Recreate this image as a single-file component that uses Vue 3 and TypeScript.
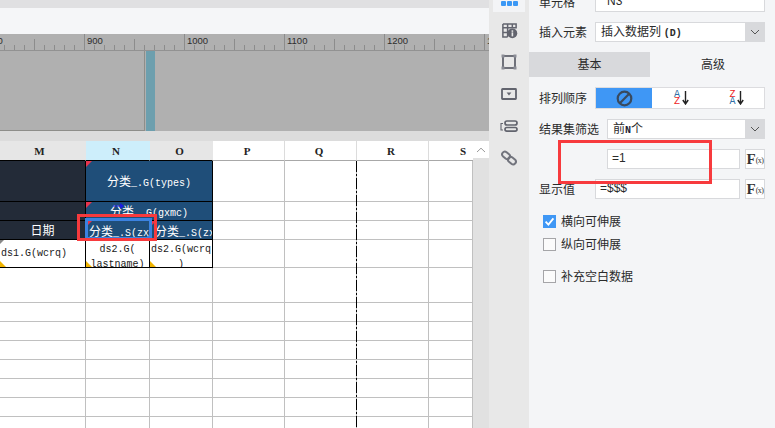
<script setup lang="ts">
interface Cell {
  key: string;
  cn?: string;
  text?: string;
  cls?: string;
  span?: number;
}

const majors = [800, 900, 1000, 1100, 1200, 1300];
const ticks: { x: number; y: number }[] = [];
for (let x = 4; x < 489; x += 10) {
  const v = x - 84 + 900;
  const y = v % 100 === 0 ? 0 : v % 50 === 0 ? 5 : 11;
  ticks.push({ x: x + 0.5, y });
}

const headers = [
  { t: 'M', c: 'hm' },
  { t: 'N', c: 'hn' },
  { t: 'O', c: 'ho' },
  { t: 'P', c: '' },
  { t: 'Q', c: '' },
  { t: 'R', c: '' },
  { t: 'S', c: 'hs' },
];
const rowHeights = [20, 41, 19, 19, 28, 35, 19, 19, 19, 19, 19, 19, 12];
const gridStyle = { gridTemplateRows: rowHeights.map((h) => h + 'px').join(' ') };

function blanks(r: number, n: number): Cell[] {
  const out: Cell[] = [];
  for (let i = 0; i < n; i++) out.push({ key: `b${r}-${i}`, cls: 'blank' });
  return out;
}

const cells: Cell[] = [
  { key: 'm1', cls: 'dark' },
  { key: 'n1', cn: '分类', text: '_.G(types)', cls: 'blue center flag', span: 2 },
  ...blanks(1, 4),
  { key: 'm2', cls: 'dark' },
  { key: 'n2', cn: '分类', text: '_.G(gxmc)', cls: 'blue center flag arrowed', span: 2 },
  ...blanks(2, 4),
  { key: 'm3', cn: '日期', cls: 'dark center' },
  { key: 'n3', cn: '分类', text: '_.S(zx', cls: 'blue left3 flag' },
  { key: 'o3', cn: '分类', text: '_.S(zx', cls: 'blue left5 flag' },
  ...blanks(3, 4),
  { key: 'm4', text: 'ds1.G(wcrq)', cls: 'data mid gray warn' },
  { key: 'n4', text: 'ds2.G(\nlastname)', cls: 'data wrap warn' },
  { key: 'o4', text: 'ds2.G(wcrq\n)', cls: 'data wrap warn' },
  ...blanks(4, 4),
  ...Array.from({ length: 8 }, (_, i) => blanks(5 + i, 7)).flat(),
];

const fx = 'F';
</script>

<template>
  <div class="screen">
    <div class="left">
      <div class="topbar"></div>
      <div class="toolbar"></div>
      <svg class="ruler" width="489" height="17" viewBox="0 0 489 17">
        <line v-for="t in ticks" :key="t.x" :x1="t.x" :x2="t.x" :y1="t.y" y2="17" stroke="#8c8c8c" stroke-width="1" />
        <line x1="0" x2="489" y1="16.5" y2="16.5" stroke="#929292" />
        <text
          v-for="m in majors"
          :key="m"
          :x="m - 900 + 87"
          y="10"
          font-size="9.5"
          font-family="'Liberation Sans', sans-serif"
          fill="#2c2c2c"
        >{{ m }}</text>
      </svg>
      <div class="canvas">
        <div class="paper"></div>
        <div class="teal"></div>
      </div>
      <div class="gutter"></div>
      <div class="sheetrow">
        <div class="sheet" :style="gridStyle">
          <div v-for="h in headers" :key="h.t" class="head" :class="h.c">{{ h.t }}</div>
          <div
            v-for="c in cells"
            :key="c.key"
            class="cell"
            :class="c.cls"
            :style="c.span ? { gridColumn: 'span ' + c.span } : undefined"
          >
            <span><span v-if="c.cn" class="cn">{{ c.cn }}</span>{{ c.text }}</span>
          </div>
          <div class="pagebreak"></div>
        </div>
        <div class="scroll">
          <div class="scrollbtn">
            <svg width="10" height="6" viewBox="0 0 10 6"><path d="M1 5 L5 1.2 L9 5" fill="none" stroke="#9a9a9a" /></svg>
          </div>
        </div>
      </div>
    </div>

    <div class="rail">
      <div class="rail-active">
        <i></i><i></i><i></i>
      </div>
      <svg class="ic ic-table" width="17" height="17" viewBox="0 0 18 18">
        <path d="M2 2 H16 V7 M2 2 V16 H7 M2 6 H16 M7 2 V16 M12 2 V7 M2 11 H8" fill="none" stroke="#62646e" stroke-width="1.6" />
        <circle cx="12" cy="12" r="5.2" fill="#62646e" />
        <rect x="11.2" y="8.8" width="1.7" height="1.6" fill="#e8e8e8" />
        <rect x="11.2" y="11" width="1.7" height="4.2" fill="#e8e8e8" />
      </svg>
      <svg class="ic ic-square" width="16" height="16" viewBox="0 0 16 16">
        <rect x="2" y="2" width="12" height="12" fill="none" stroke="#62646e" stroke-width="1.8" />
        <rect x="0.5" y="0.5" width="3" height="3" fill="#8b8d96" />
        <rect x="12.5" y="0.5" width="3" height="3" fill="#8b8d96" />
        <rect x="0.5" y="12.5" width="3" height="3" fill="#8b8d96" />
        <rect x="12.5" y="12.5" width="3" height="3" fill="#8b8d96" />
      </svg>
      <svg class="ic ic-drop" width="16" height="12" viewBox="0 0 16 12">
        <rect x="1" y="1" width="14" height="10" rx="0.5" fill="none" stroke="#62646e" stroke-width="1.8" />
        <path d="M5.6 4.6 H10.4 L8 7.6 Z" fill="#62646e" />
      </svg>
      <svg class="ic ic-layout" width="18" height="12" viewBox="0 0 18 12">
        <path d="M3 3.5 H1 V10 H3" fill="none" stroke="#62646e" stroke-width="1.1" />
        <rect x="5" y="1" width="12" height="4" rx="2" fill="none" stroke="#62646e" stroke-width="1.7" />
        <rect x="5" y="7.5" width="12" height="3.6" rx="1.8" fill="none" stroke="#62646e" stroke-width="1.7" />
      </svg>
      <svg class="ic ic-link" width="16" height="16" viewBox="0 0 16 16">
        <g fill="none" stroke="#72747d" stroke-width="2">
          <rect x="0.8" y="2.6" width="8.6" height="5.4" rx="2.7" transform="rotate(40 5 5.3)" />
          <rect x="6.6" y="8" width="8.6" height="5.4" rx="2.7" transform="rotate(40 11 10.7)" />
        </g>
      </svg>
    </div>

    <div class="panel">
      <div class="row first">
        <label class="lab">单元格</label>
        <div class="inp">N3</div>
      </div>
      <div class="row">
        <label class="lab">插入元素</label>
        <div class="select">
          <span class="val">插入数据列 <small>(D)</small></span>
          <span class="chev"><svg width="10" height="6" viewBox="0 0 10 6"><path d="M1 1 L5 5 L9 1" fill="none" stroke="#555" /></svg></span>
        </div>
      </div>
      <div class="tabs">
        <div class="tab on">基本</div>
        <div class="tab">高级</div>
      </div>
      <div class="row seg-row">
        <label class="lab">排列顺序</label>
        <div class="seg">
          <div class="seg-i active">
            <svg width="17" height="17" viewBox="0 0 17 17">
              <circle cx="8.5" cy="8.5" r="6.8" fill="none" stroke="#394a5e" stroke-width="2.2" />
              <path d="M3.8 13.2 L13.2 3.8" stroke="#394a5e" stroke-width="2.2" />
            </svg>
          </div>
          <div class="seg-i mid">
            <span class="sort"><span class="az"><b class="a">A</b><b class="z">Z</b></span><svg width="7" height="14" viewBox="0 0 7 14"><path d="M3.5 0 V13 M0.8 9 L3.5 13 L6.2 9" fill="none" stroke="#222" stroke-width="1.4" /></svg></span>
          </div>
          <div class="seg-i last">
            <span class="sort"><span class="az"><b class="z">Z</b><b class="a">A</b></span><svg width="7" height="14" viewBox="0 0 7 14"><path d="M3.5 0 V13 M0.8 9 L3.5 13 L6.2 9" fill="none" stroke="#222" stroke-width="1.4" /></svg></span>
          </div>
        </div>
      </div>
      <div class="row">
        <label class="lab wide">结果集筛选</label>
        <div class="select">
          <span class="val">前<small class="n">N</small>个</span>
          <span class="chev"><svg width="10" height="6" viewBox="0 0 10 6"><path d="M1 1 L5 5 L9 1" fill="none" stroke="#555" /></svg></span>
        </div>
      </div>
      <div class="row indent">
        <div class="inp formula">=1</div>
        <div class="fx">{{ fx }}<small>(x)</small></div>
      </div>
      <div class="row">
        <label class="lab">显示值</label>
        <div class="inp formula">=$$$</div>
        <div class="fx">{{ fx }}<small>(x)</small></div>
      </div>
      <div class="checks">
        <div class="chk">
          <span class="box on"><svg width="13" height="13" viewBox="0 0 13 13"><path d="M2.6 6.6 L5.4 9.6 L10.4 3.4" fill="none" stroke="#fff" stroke-width="1.8" /></svg></span><span class="txt">横向可伸展</span>
        </div>
        <div class="chk">
          <span class="box"></span><span class="txt">纵向可伸展</span>
        </div>
        <div class="chk gap">
          <span class="box"></span><span class="txt">补充空白数据</span>
        </div>
      </div>
    </div>

    <div class="selection"><i></i></div>
    <div class="redbox one"></div>
    <div class="redbox two"></div>
  </div>
</template>

<style>
html, body { margin: 0; padding: 0; background: #f4f5f7; }
</style>

<style scoped>
.screen {
  position: relative;
  display: flex;
  width: 775px;
  height: 428px;
  overflow: hidden;
  font-family: "Noto Sans CJK SC", "Liberation Sans", sans-serif;
  font-size: 12px;
  color: #2b2b2b;
}
.left { width: 489px; flex: none; display: flex; flex-direction: column; }
.topbar { height: 8px; background: #e0e0e2; }
.toolbar { height: 26px; background: #f5f6f8; }
.ruler { display: block; background: #b0b0b0; }
.canvas { height: 80px; display: flex; background: #b0b0b0; }
.paper { width: 144px; height: 79px; border-right: 1px solid #8e8e8a; border-bottom: 1px solid #8e8e8a; box-sizing: content-box; }
.teal { width: 9px; margin-left: 1px; background: #6d9fae; }
.gutter { height: 10px; background: #dcdcdc; }
.sheetrow { flex: 1; display: flex; min-height: 0; }
.sheet {
  position: relative;
  width: 473px;
  flex: none;
  display: grid;
  grid-template-columns: 86px 64px 63px 72px 72px 72px 44px;
  background: #fff;
  overflow: hidden;
}
.head {
  display: flex;
  align-items: center;
  justify-content: center;
  padding-right: 3px;
  box-sizing: border-box;
  font-family: "Liberation Serif", serif;
  font-size: 11px;
  font-weight: 700;
  color: #222;
  background: #fff;
  border-right: 1px solid #dcdcdc;
  border-bottom: 1px solid #a8a8a8;
}
.hm { background: #e6e6e6; padding-right: 6px; border-bottom-color: #000; border-right-color: #e6e6e6; }
.hn { background: #cdeefb; border-bottom-color: #000; border-right-color: #cdeefb; }
.ho { background: #e6e6e6; border-bottom-color: #000; border-right-color: #e6e6e6; }
.hs { justify-content: center; padding: 0 0 0 24px; border-right: 0; }

.cell {
  position: relative;
  box-sizing: border-box;
  overflow: hidden;
  white-space: nowrap;
  font-family: "Liberation Mono", monospace;
  font-size: 10px;
  border-right: 1px solid #000;
  border-bottom: 1px solid #000;
  min-width: 0;
}
.cn { font-family: "Noto Sans CJK SC", sans-serif; font-size: 12px; }
.blank { border-right-color: #c0c0c0; border-bottom-color: #c0c0c0; }
.dark { background: #232b38; color: #fff; }
.blue { background: #1f4e79; color: #fff; }
.data { background: #fff; color: #1a1a1a; }
.center { display: flex; align-items: center; justify-content: center; padding-bottom: 1px; }
.left3 { display: flex; align-items: center; padding-left: 3px; }
.left5 { display: flex; align-items: center; padding-left: 5px; }
.mid { display: flex; align-items: center; padding: 0 0 0 1px; }
.wrap { white-space: pre-line; text-align: center; line-height: 15px; padding-top: 2px; }
.flag::before {
  content: "";
  position: absolute;
  left: 0;
  top: 0;
  border-top: 6px solid #e8344e;
  border-right: 6px solid transparent;
}
.gray::before {
  content: "";
  position: absolute;
  left: 0;
  top: 0;
  border-top: 4px solid #888;
  border-right: 4px solid transparent;
}
.warn::after {
  content: "";
  position: absolute;
  left: 0;
  bottom: 0;
  border-bottom: 6px solid #f0b400;
  border-right: 6px solid transparent;
}
.arrowed::after {
  content: "";
  position: absolute;
  left: 27px;
  top: 1px;
  width: 11px;
  height: 6px;
  background: #1c1ce6;
  clip-path: polygon(0 40%, 65% 40%, 65% 0, 100% 50%, 65% 100%, 65% 60%, 0 60%);
}
.pagebreak {
  position: absolute;
  left: 356px;
  top: 20px;
  bottom: 0;
  width: 1px;
  background: repeating-linear-gradient(to bottom, #000 0 11px, #bbb 11px 13px, #000 13px 15px, #bbb 15px 17px);
}
.scroll { width: 16px; flex: none; background: #e1e1e1; }
.scrollbtn { height: 17px; background: #fff; display: flex; align-items: center; justify-content: center; }

.rail {
  position: relative;
  width: 40px;
  flex: none;
  background: #e8e8e8;
  display: flex;
  flex-direction: column;
  align-items: center;
}
.rail-active {
  width: 32px;
  height: 12px;
  background: #f3f4f6;
  display: flex;
  justify-content: center;
  gap: 1px;
  padding-top: 1px;
  box-sizing: border-box;
}
.rail-active i { display: block; width: 5px; height: 5px; background: #3b98f5; border-radius: 1px; }
.ic { display: block; flex: none; }
.ic-table { margin-top: 10px; }
.ic-square { margin-top: 15px; }
.ic-drop { margin-top: 18px; }
.ic-layout { margin-top: 20px; }
.ic-link { margin-top: 18px; }

.panel {
  flex: 1;
  background: #f4f5f7;
  padding: 0 10px;
  display: flex;
  flex-direction: column;
  gap: 10px;
  min-width: 0;
}
.row { display: flex; align-items: center; height: 20px; flex: none; }
.first { margin-top: -8px; }
.lab { width: 56px; flex: none; padding-bottom: 2px; }
.lab.wide { width: 68px; }
.inp {
  flex: 1;
  height: 20px;
  box-sizing: border-box;
  background: #fff;
  border: 1px solid #d8d9dc;
  padding-left: 11px;
  line-height: 17px;
  font-family: "Liberation Sans", sans-serif;
  font-size: 12px;
}
.formula { padding-left: 4px; }
.indent { margin-left: 68px; }
.select {
  flex: 1;
  height: 20px;
  display: flex;
  box-sizing: border-box;
  background: #fff;
  border: 1px solid #d8d9dc;
  border-right: 0;
}
.val { flex: 1; padding-left: 5px; line-height: 16px; }
.val small { font-family: "Liberation Mono", monospace; font-size: 10px; font-weight: 700; }
.val small.n { color: #223; font-size: 10px; }
.chev { width: 20px; background: #d8d9dc; display: flex; align-items: center; justify-content: center; }
.tabs { display: flex; gap: 1px; margin: 0 -10px; height: 25px; flex: none; }
.tab { flex: 1; display: flex; align-items: center; justify-content: center; background: #f4f5f7; padding-bottom: 2px; box-sizing: border-box; }
.tab.on { width: 121px; flex: none; background: #d8d9dc; }
.seg-row { height: 22px; }
.seg {
  flex: 1;
  height: 22px;
  display: flex;
  box-sizing: border-box;
  border: 1px solid #dcdcdf;
  background: #fff;
}
.seg-i { display: flex; align-items: center; justify-content: center; }
.seg-i.active { width: 56px; background: #3f97f5; }
.seg-i.mid { width: 56px; }
.seg-i.last { flex: 1; }
.sort { display: flex; align-items: center; gap: 1px; }
.az { display: flex; flex-direction: column; gap: 0; }
.az b {
  display: block;
  font-family: "Liberation Mono", monospace;
  font-size: 10px;
  line-height: 7px;
  height: 7px;
  font-weight: 400;
  width: 7px;
  text-align: center;
}
.a { color: #2f6fa5; }
.z { color: #ee1c25; }
.fx {
  width: 20px;
  height: 20px;
  margin-left: 5px;
  flex: none;
  box-sizing: border-box;
  background: #fff;
  border: 1px solid #d8d9dc;
  display: flex;
  align-items: center;
  justify-content: center;
  font-family: "Liberation Serif", serif;
  font-weight: 700;
  font-size: 15px;
  line-height: 1;
  color: #333;
}
.fx small { font-size: 8px; font-weight: 400; margin-top: 3px; letter-spacing: -0.5px; }
.checks { display: flex; flex-direction: column; gap: 10px; margin-top: 6px; padding-left: 4px; }
.chk { display: flex; align-items: center; height: 13px; gap: 5px; }
.chk.gap { margin-top: 9px; }
.txt { line-height: 13px; margin-bottom: 3px; }
.box {
  width: 13px;
  height: 13px;
  box-sizing: border-box;
  border: 1px solid #a5a5a8;
  background: #fbfbfb;
  flex: none;
}
.box.on { background: #3f97f5; border: 0; }
.box svg { display: block; }

.selection {
  position: absolute;
  left: 85px;
  top: 218px;
  width: 67px;
  height: 21px;
  box-sizing: border-box;
  border: 3px solid #3b82e0;
  border-bottom-width: 2px;
}
.selection i {
  position: absolute;
  right: -2px;
  bottom: -3px;
  width: 4px;
  height: 4px;
  background: #3b82e0;
}
.redbox { position: absolute; box-sizing: border-box; border: 3px solid #f73a3d; }
.one { left: 77px; top: 214px; width: 80px; height: 27px; }
.two { left: 558px; top: 140px; width: 154px; height: 44px; }
</style>
